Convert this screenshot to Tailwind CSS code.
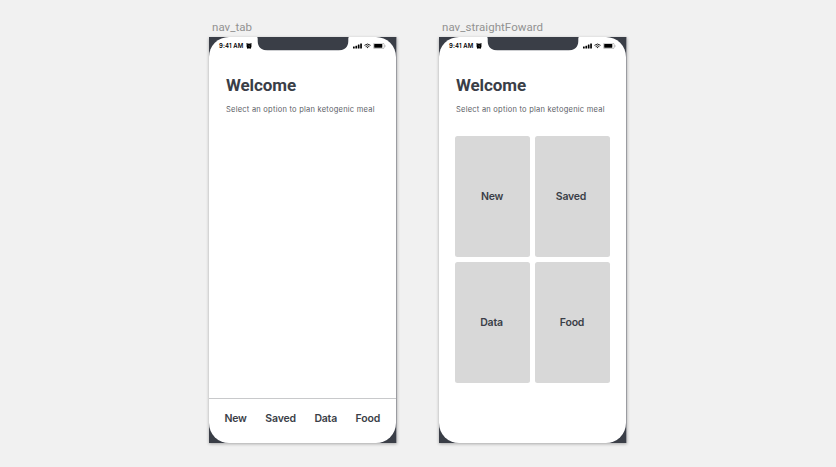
<!DOCTYPE html>
<html lang="en">
<head>
<meta charset="utf-8">
<title>Navigation artboards</title>
<script src="https://cdn.jsdelivr.net/npm/@tailwindcss/browser@4"></script>
</head>
<body class="w-[836px] h-[467px] overflow-hidden bg-[#f1f1f1] font-['Inter',sans-serif] text-[#3a3e47]">
<svg class="hidden">
  <symbol id="notch" viewBox="0 0 92 13.5"><path fill="#3a3e47" d="M0 0H92C91.500 0 91.300 .8 91.300 2V4C91.300 10 87.500 13.500 81.500 13.500H10.500C4.500 13.500 .7 10 .7 4V2C.7 .8 .5 0 0 0Z"/></symbol>
  <symbol id="alarm" viewBox="0 0 6 6"><circle cx="3" cy="3.100" r="2.500"/><path d="M.4 1.300 1.600.5M5.600 1.300 4.400.5M1.400 5.500l.6-.8M4.600 5.500 4 4.700" stroke="#000" stroke-width="1.100"/><path d="M3 2v1.300l.7.4" fill="none" stroke="#fff" stroke-width=".25"/></symbol>
  <symbol id="signal" viewBox="0 0 9 6"><rect x="0" y="3.500" width="1.700" height="2" rx=".3"/><rect x="2.400" y="2.700" width="1.700" height="2.800" rx=".3"/><rect x="4.800" y="1.600" width="1.700" height="3.900" rx=".3"/><rect x="7.200" y=".5" width="1.700" height="5" rx=".3"/></symbol>
  <symbol id="wifi" viewBox="0 0 8 6"><g fill="none" stroke="#000" stroke-width="1"><path d="M.5 2.300Q4-.9 7.500 2.300"/><path d="M1.900 3.700Q4 1.800 6.100 3.700"/></g><path d="M2.900 4.600Q4 3.700 5.100 4.600L4 5.700Z"/></symbol>
  <symbol id="battery" viewBox="0 0 13 6"><rect x=".3" y=".3" width="10.900" height="5.300" rx="1.300" fill="none" stroke="#000" stroke-opacity=".4" stroke-width=".6"/><rect x="1.200" y="1.100" width="8.100" height="3.700" rx=".5"/><path d="M11.800 2c.9.3.9 1.600 0 1.900Z" opacity=".45"/></symbol>
</svg>
<main class="flex gap-[42px] pl-[209px] pt-[19px]">
  <section class="w-[188px]">
    <h2 class="h-[18px] pl-[3px] font-['Roboto',sans-serif] text-[11.500px] leading-[17px] tracking-[0.05px] text-[#929292]">nav_tab</h2>
    <div class="h-[406px] border-r border-[#9b9ca1] bg-[#3a3e47] shadow-[0_1px_3px_rgba(0,0,0,0.3)]">
      <div class="flex h-[406px] w-[187px] flex-col rounded-[20px] bg-white">
        <header class="flex h-[17px] items-start">
          <div class="flex w-[48px] shrink-0 pl-[10px] pt-[5px]">
            <span class="w-[26.500px] whitespace-nowrap text-[6px] font-semibold leading-[8px] tracking-[0.12px] text-black">9:41 AM</span>
            <svg class="mt-[1px] h-[6px] w-[6px] shrink-0"><use href="#alarm"/></svg>
          </div>
          <svg class="h-[13.5px] w-[92px] shrink-0"><use href="#notch"/></svg>
          <div class="flex pl-[4.300px] pt-[5.500px]">
            <svg class="h-[6px] w-[9px]"><use href="#signal"/></svg>
            <svg class="ml-[2px] h-[6px] w-[7px]"><use href="#wifi"/></svg>
            <svg class="ml-[1.700px] h-[6px] w-[13px]"><use href="#battery"/></svg>
          </div>
        </header>
        <div class="flex-1 pl-[17px] pt-[21px]">
          <h1 class="whitespace-nowrap font-['Roboto',sans-serif] text-[17px] font-bold leading-[21px] tracking-[-0.1px]">Welcome</h1>
          <p class="mt-[8px] whitespace-nowrap text-[7.500px] leading-[11px] tracking-[0.24px] text-[#5b5e66]">Select an option to plan ketogenic meal</p>
        </div>
        <nav class="flex h-[45px] justify-between border-t border-[#c8c9cb] pl-[15.500px] pr-[16px] pt-[12px] text-[10.500px] font-semibold leading-[15px] tracking-[-0.2px]">
          <span>New</span><span>Saved</span><span>Data</span><span>Food</span>
        </nav>
      </div>
    </div>
  </section>
  <section class="w-[188px]">
    <h2 class="h-[18px] pl-[3px] font-['Roboto',sans-serif] text-[11.500px] leading-[17px] tracking-[0.05px] text-[#929292]">nav_straightFoward</h2>
    <div class="h-[406px] border-r border-[#9b9ca1] bg-[#3a3e47] shadow-[0_1px_3px_rgba(0,0,0,0.3)]">
      <div class="flex h-[406px] w-[187px] flex-col rounded-[20px] bg-white">
        <header class="flex h-[17px] items-start">
          <div class="flex w-[48px] shrink-0 pl-[10px] pt-[5px]">
            <span class="w-[26.500px] whitespace-nowrap text-[6px] font-semibold leading-[8px] tracking-[0.12px] text-black">9:41 AM</span>
            <svg class="mt-[1px] h-[6px] w-[6px] shrink-0"><use href="#alarm"/></svg>
          </div>
          <svg class="h-[13.5px] w-[92px] shrink-0"><use href="#notch"/></svg>
          <div class="flex pl-[4.300px] pt-[5.500px]">
            <svg class="h-[6px] w-[9px]"><use href="#signal"/></svg>
            <svg class="ml-[2px] h-[6px] w-[7px]"><use href="#wifi"/></svg>
            <svg class="ml-[1.700px] h-[6px] w-[13px]"><use href="#battery"/></svg>
          </div>
        </header>
        <div class="h-[82px] pl-[17px] pt-[21px]">
          <h1 class="whitespace-nowrap font-['Roboto',sans-serif] text-[17px] font-bold leading-[21px] tracking-[-0.1px]">Welcome</h1>
          <p class="mt-[8px] whitespace-nowrap text-[7.500px] leading-[11px] tracking-[0.24px] text-[#5b5e66]">Select an option to plan ketogenic meal</p>
        </div>
        <div class="grid grid-cols-[75px_75px] grid-rows-[121px_121px] gap-[5px] pl-[16px] text-[10.500px] font-semibold leading-[15px] tracking-[-0.2px]">
          <div class="flex items-center justify-center rounded-[2.500px] bg-[#d8d8d8] pr-[1px]">New</div>
          <div class="flex items-center justify-center rounded-[2.500px] bg-[#d8d8d8] pr-[3px]">Saved</div>
          <div class="flex items-center justify-center rounded-[2.500px] bg-[#d8d8d8] pr-[2px]">Data</div>
          <div class="flex items-center justify-center rounded-[2.500px] bg-[#d8d8d8] pr-[1px]">Food</div>
        </div>
      </div>
    </div>
  </section>
</main>
</body>
</html>
